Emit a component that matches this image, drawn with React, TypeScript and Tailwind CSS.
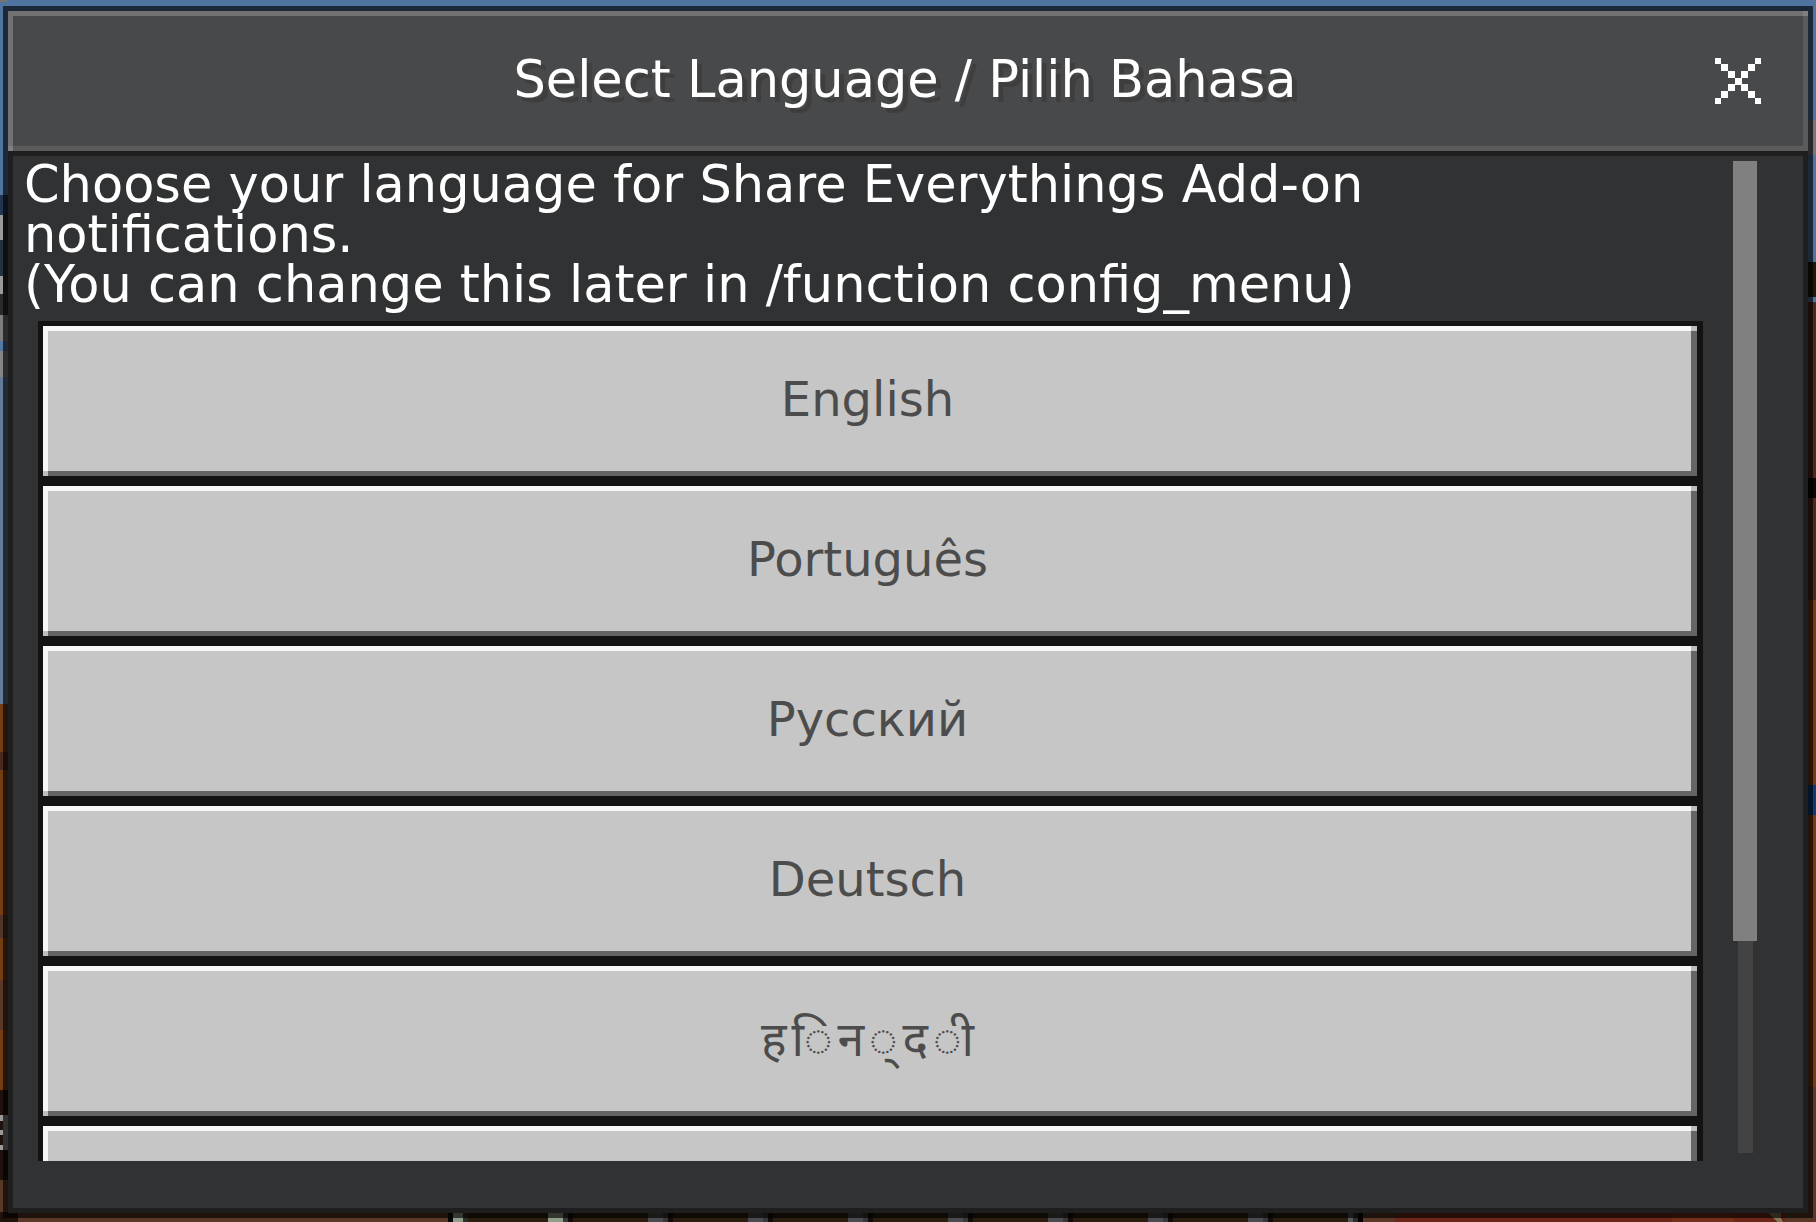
const languages: { id: string; label: string[] }[] = [
  { id: "en", label: ["English"] },
  { id: "pt", label: ["Português"] },
  { id: "ru", label: ["Русский"] },
  { id: "de", label: ["Deutsch"] },
  // the game font has no shaping, so every code point stands alone
  { id: "hi", label: ["ह", "ि", "न", "्", "द", "ी"] },
];

const message = [
  "Choose your language for Share Everythings Add-on",
  "notifications.",
  "(You can change this later in /function config_menu)",
];

const slots = [548, 648, 748, 848, 948, 1048, 1148, 1248];

const crossCells = [
  [0, 0], [6, 1], [13, 2], [20, 3], [26, 2], [33, 1], [40, 0],
  [33, 5], [26, 4], [13, 4], [6, 5], [0, 6], [40, 6],
];
const crossRows = [0, 6, 13, 20, 26, 33, 40];

function World() {
  return (
    <svg
      aria-hidden="true"
      className="absolute inset-0 h-full w-full"
      viewBox="0 0 1816 1222"
      preserveAspectRatio="none"
      shapeRendering="crispEdges"
    >
      <rect width="1816" height="1222" fill="#4f749f" />
      <rect width="7" height="2" fill="#77736f" />
      {/* left edge */}
      <rect y="195" width="10" height="20" fill="#23364f" />
      <rect y="215" width="3" height="25" fill="#9a9a9a" />
      <rect x="3" y="215" width="7" height="100" fill="#2b2b2b" />
      <rect y="240" width="3" height="36" fill="#23313f" />
      <rect y="276" width="3" height="18" fill="#9a9a9a" />
      <rect y="294" width="3" height="21" fill="#2b2b2b" />
      <rect y="315" width="10" height="26" fill="#7d7d7d" />
      <rect y="341" width="10" height="10" fill="#5577a4" />
      <rect y="351" width="10" height="26" fill="#858585" />
      <rect y="377" width="10" height="327" fill="#637c99" />
      <rect y="704" width="10" height="386" fill="#743d12" />
      <rect y="752" width="10" height="18" fill="#4a2a20" />
      <rect y="915" width="10" height="23" fill="#52352a" />
      <rect y="980" width="10" height="50" fill="#5a3828" />
      <rect y="1090" width="10" height="90" fill="#1f120d" />
      <rect x="3" y="1115" width="5" height="35" fill="#8c8c8c" />
      <rect y="1115" width="3" height="6" fill="#9a9a9a" />
      <rect y="1130" width="3" height="5" fill="#9a9a9a" />
      <rect y="1145" width="3" height="5" fill="#9a9a9a" />
      <rect y="1180" width="10" height="42" fill="#5a3828" />
      {/* right edge */}
      <rect x="1806" y="120" width="10" height="35" fill="#777" />
      <rect x="1806" y="262" width="10" height="35" fill="#1c1b05" />
      <rect x="1806" y="302" width="10" height="480" fill="#4d2a1b" />
      <rect x="1806" y="478" width="10" height="20" fill="#0e0705" />
      <rect x="1806" y="600" width="10" height="487" fill="#743d12" />
      <rect x="1806" y="785" width="10" height="30" fill="#083d75" />
      <rect x="1806" y="1087" width="10" height="135" fill="#5a382a" />
      {/* floor and hotbar */}
      <rect y="1212" width="1816" height="10" fill="#5a3828" />
      <rect y="1212" width="18" height="10" fill="#22120c" />
      <rect x="1395" y="1212" width="390" height="10" fill="#6b2717" />
      <rect x="1672" y="1212" width="62" height="10" fill="#74301b" />
      <path d="M1767 1212h14v6l2 4h-5l-6-5z" fill="#857559" />
      <rect x="448" y="1212" width="915" height="10" fill="#2b1e0e" />
      <rect x="448" y="1212" width="5" height="10" fill="#080606" />
      <rect x="453" y="1212" width="10" height="10" fill="#8f9d8a" />
      <rect x="463" y="1212" width="5" height="10" fill="#2c302b" />
      {slots.map((x) => (
        <g key={x}>
          <rect x={x} y="1212" width="15" height="10" fill={x === 548 ? "#8f9d8a" : "#4b4b4f"} />
          <rect x={x + 15} y="1212" width="5" height="10" fill="#38383b" />
          <rect x={x + 20} y="1212" width="5" height="10" fill="#120b0a" />
        </g>
      ))}
      <rect x="1348" y="1212" width="5" height="10" fill="#58585a" />
      <rect x="1353" y="1212" width="5" height="10" fill="#2c2c2e" />
      <rect x="1358" y="1212" width="5" height="10" fill="#050303" />
    </svg>
  );
}

function CloseIcon() {
  return (
    <svg className="h-[46px] w-[46px]" viewBox="0 0 46 46" fill="#fff" shapeRendering="crispEdges">
      {crossCells.map(([x, row]) => (
        <rect
          key={`${x}-${row}`}
          x={x}
          y={crossRows[row]}
          width={x === 0 || x === 40 ? 6 : 7}
          height={row === 0 || row === 6 ? 6 : 7}
        />
      ))}
    </svg>
  );
}

// square blends where the light and the dark bevel meet
function BevelCorners({ className }: { className: string }) {
  return (
    <>
      <span className={`absolute top-[-5px] right-[-6px] h-[5px] w-[6px] ${className}`} />
      <span className={`absolute bottom-[-5px] left-[-5px] h-[5px] w-[5px] ${className}`} />
    </>
  );
}

function LanguageButton({ label }: { label: string[] }) {
  return (
    <button
      type="button"
      className="block h-40 w-full shrink-0 border-[5px] border-r-[6px] border-[#131313] text-[#4c4c4c]"
    >
      <span className="relative flex h-full items-center justify-center gap-[5px] border-[5px] border-r-[6px] border-t-[#f7f7f7] border-r-[#656565] border-b-[#636464] border-l-[#f7f7f7] bg-[#c6c6c6] pr-1 pb-1">
        {label.map((part) => (
          <span key={part}>{part}</span>
        ))}
        <BevelCorners className="bg-[#bdbdbd]" />
      </span>
    </button>
  );
}

export default function App() {
  return (
    <main className="relative h-screen overflow-hidden font-['DejaVu_Sans','Noto_Sans',sans-serif] text-[48px] leading-[50px]">
      <World />
      <div className="relative h-full px-[3px] pt-[6px] pb-1">
        <section
          role="dialog"
          aria-labelledby="title"
          className="flex h-full flex-col border-[5px] border-black/65"
        >
          <header className="relative flex h-[140px] shrink-0 items-center border-[5px] border-t-[#727272] border-r-[#5b5b5c] border-b-[#5b5b5c] border-l-[#727272] bg-[#48494a] pr-[42px] pl-[82px]">
            <h1
              id="title"
              className="flex-1 pb-[2px] text-center text-[51px] text-white [text-shadow:5px_5px_0_#3e3e3f]"
            >
              Select Language / Pilih Bahasa
            </h1>
            <button type="button" aria-label="Close">
              <CloseIcon />
            </button>
            <span className="absolute top-[-5px] right-[-5px] h-[5px] w-[5px] bg-[#808081]" />
            <span className="absolute bottom-[-5px] left-[-5px] h-[5px] w-[5px] bg-[#808081]" />
          </header>

          <div className="flex min-h-0 flex-1 border-[5px] border-[#1e1e1f] bg-[#313233] pr-[46px]">
            <div className="mb-[47px] flex min-w-0 flex-1 flex-col overflow-hidden pr-[30px]">
              <p className="shrink-0 pt-1 pl-[11px] text-[51px] whitespace-nowrap text-white">
                {message.map((line) => (
                  <span key={line} className="block">
                    {line}
                  </span>
                ))}
              </p>
              <div className="mt-[11px] flex flex-col pl-[25px]">
                {languages.map((l) => (
                  <LanguageButton key={l.id} label={l.label} />
                ))}
                <LanguageButton label={[]} />
              </div>
            </div>

            <div className="mt-[5px] mb-[55px] flex w-6 flex-col items-center">
              <div className="h-[780px] w-6 bg-[#808080]" />
              <div className="w-[15px] flex-1 bg-[#434343]" />
            </div>
          </div>
        </section>
      </div>
    </main>
  );
}
